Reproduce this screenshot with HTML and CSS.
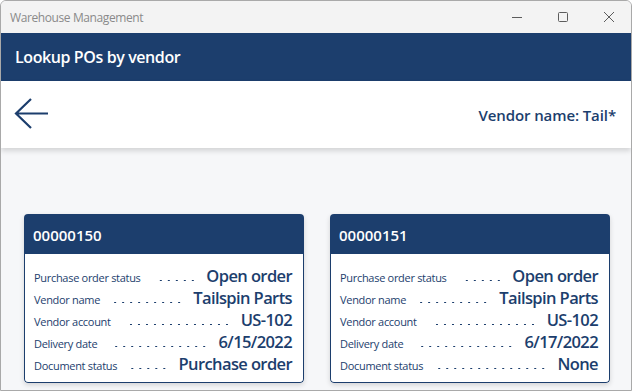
FILE: index.html
```html
<!DOCTYPE html>
<html lang="en">
<head>
    <meta charset="UTF-8">
    <meta name="viewport" content="width=device-width, initial-scale=1.0">
    <title>Warehouse Management</title>
    <link rel="stylesheet" href="styles.css">
</head>
<body>
    <div class="window">
        <div class="titlebar">
            <span class="app-name">Warehouse Management</span>
            <div class="controls">
                <svg width="12" height="12" viewBox="0 0 12 12"><path d="M1 6.5h10" stroke="#5c5c5c" stroke-width="1"/></svg>
                <svg width="12" height="12" viewBox="0 0 12 12"><rect x="1.5" y="1.5" width="9" height="9" rx="1" fill="none" stroke="#5c5c5c" stroke-width="1"/></svg>
                <svg width="12" height="12" viewBox="0 0 12 12"><path d="M1 1l10 10M11 1L1 11" stroke="#5c5c5c" stroke-width="1"/></svg>
            </div>
        </div>
        <header class="appbar">
            <h1>Lookup POs by vendor</h1>
        </header>
        <div class="toolbar">
            <button class="back" aria-label="Back">
                <svg width="36" height="34" viewBox="0 0 36 34">
                    <path d="M34 15.5H2M17 1L2 15.5 17 30" fill="none" stroke="#1c3e6d" stroke-width="2.2" stroke-linejoin="miter"/>
                </svg>
            </button>
            <span class="filter">Vendor name: Tail*</span>
        </div>
        <main class="content">
            <div class="card">
                <div class="card-head">00000150</div>
                <div class="card-body">
                    <div class="row"><span class="label">Purchase order status</span><span class="dots"></span><span class="value">Open order</span></div>
                    <div class="row"><span class="label">Vendor name</span><span class="dots"></span><span class="value">Tailspin Parts</span></div>
                    <div class="row"><span class="label">Vendor account</span><span class="dots"></span><span class="value">US-102</span></div>
                    <div class="row"><span class="label">Delivery date</span><span class="dots"></span><span class="value">6/15/2022</span></div>
                    <div class="row"><span class="label">Document status</span><span class="dots"></span><span class="value">Purchase order</span></div>
                </div>
            </div>
            <div class="card">
                <div class="card-head">00000151</div>
                <div class="card-body">
                    <div class="row"><span class="label">Purchase order status</span><span class="dots"></span><span class="value">Open order</span></div>
                    <div class="row"><span class="label">Vendor name</span><span class="dots"></span><span class="value">Tailspin Parts</span></div>
                    <div class="row"><span class="label">Vendor account</span><span class="dots"></span><span class="value">US-102</span></div>
                    <div class="row"><span class="label">Delivery date</span><span class="dots"></span><span class="value">6/17/2022</span></div>
                    <div class="row"><span class="label">Document status</span><span class="dots"></span><span class="value">None</span></div>
                </div>
            </div>
        </main>
    </div>
</body>
</html>
```
FILE: styles.css
```css
* {
    box-sizing: border-box;
}
body {
    margin: 0;
    font-family: 'Open Sans', 'Noto Sans', sans-serif;
    color: #1c3e6d;
}
.window {
    width: 632px;
    height: 391px;
    border: 1px solid #a9a9a9;
    border-radius: 6px 6px 0 0;
    overflow: hidden;
    background: #f6f7f9;
    display: flex;
    flex-direction: column;
}
.titlebar {
    height: 32px;
    flex: none;
    background: #f3f3f3;
    display: flex;
    align-items: center;
    justify-content: space-between;
    padding-left: 9px;
}
.app-name {
    font-size: 12px;
    color: #8a8a8a;
    letter-spacing: -0.4px;
}
.controls {
    display: flex;
    gap: 34px;
    padding-right: 16px;
}
.appbar {
    height: 48px;
    flex: none;
    background: #1c3e6d;
    display: flex;
    align-items: center;
    padding-left: 14px;
}
.appbar h1 {
    margin: 0;
    font-size: 16px;
    font-weight: 600;
    color: #fff;
    letter-spacing: -0.4px;
}
.toolbar {
    height: 67px;
    flex: none;
    background: #fff;
    display: flex;
    align-items: center;
    justify-content: space-between;
    padding: 0 15px 0 13px;
    box-shadow: 0 3px 5px rgba(0, 0, 0, 0.14);
    position: relative;
}
.back {
    border: 0;
    background: none;
    padding: 0;
    display: flex;
}
.filter {
    font-size: 15px;
    font-weight: 600;
    letter-spacing: -0.1px;
}
.content {
    flex: 1;
    display: flex;
    gap: 26px;
    padding: 66px 0 0 23px;
}
.card {
    width: 280px;
    height: 169px;
    border-radius: 4px;
    overflow: hidden;
    box-shadow: 0 2px 5px rgba(0, 0, 0, 0.15);
    display: flex;
    flex-direction: column;
}
.card-head {
    height: 40px;
    background: #1c3e6d;
    color: #fff;
    font-size: 15px;
    font-weight: 600;
    display: flex;
    align-items: center;
    padding: 2px 0 0 9px;
}
.card-body {
    flex: 1;
    background: #fff;
    border: 1px solid #1c3e6d;
    border-top: 0;
    border-radius: 0 0 4px 4px;
    padding: 10px 11px 0 9px;
}
.row {
    display: flex;
    align-items: baseline;
    height: 22px;
}
.label {
    font-size: 11px;
    white-space: nowrap;
    letter-spacing: -0.3px;
}
.dots {
    flex: 1;
    height: 3px;
    margin: 0 10px 0 13px;
    background-image: radial-gradient(circle, #1c3e6d 0.8px, transparent 1.1px);
    background-size: 8px 3px;
    background-position: right center;
    background-repeat: repeat-x;
}
.value {
    font-size: 16.5px;
    font-weight: 600;
    white-space: nowrap;
    letter-spacing: -0.6px;
}
```
